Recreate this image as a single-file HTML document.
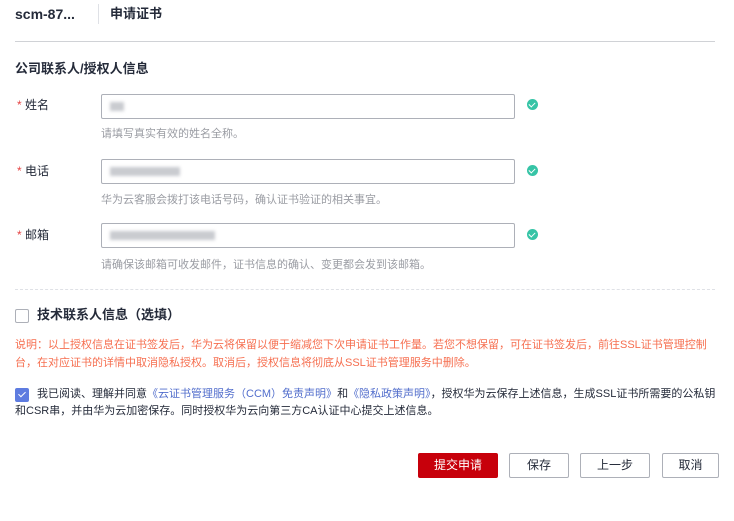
<!DOCTYPE html>
<html><head><meta charset="utf-8"><style>
*{margin:0;padding:0;box-sizing:border-box}
body{width:734px;height:521px;background:#fff;font-family:"Liberation Sans","Noto Sans CJK SC",sans-serif;color:#252b3a;position:relative;overflow:hidden;font-size:12px}
.a{position:absolute;white-space:nowrap}
.inp{position:absolute;left:101px;width:414px;height:25px;border:1px solid #adb0b8;border-radius:2px}
.blur{position:absolute;left:8px;top:7px;height:9px;background:#c9cbd0;filter:blur(1.5px)}
.ok{position:absolute;left:527px;width:11px;height:11px;border-radius:50%;background:#36c4a6}
.ok:after{content:"";position:absolute;left:3px;top:2px;width:3px;height:5px;border:solid #fff;border-width:0 1.5px 1.5px 0;transform:rotate(45deg)}
.star{color:#e54545}
.hint{color:#9a9ca3;font-size:11px}
.btn{position:absolute;top:453px;height:25px;border:1px solid #adb0b8;border-radius:2px;text-align:center;line-height:23px;font-size:12px;color:#252b3a}
</style></head><body>
<div class="a" style="left:15px;top:5px;font-size:14px;font-weight:bold;line-height:18px">scm-87...</div>
<div class="a" style="left:98px;top:4px;width:1px;height:20px;background:#dfe1e6"></div>
<div class="a" style="left:110px;top:5px;font-size:13px;font-weight:bold;line-height:18px">申请证书</div>
<div class="a" style="left:15px;top:41px;width:700px;height:1px;background:#d0d2d6"></div>
<div class="a" style="left:15px;top:60px;font-size:13px;font-weight:bold;line-height:17px">公司联系人/授权人信息</div>

<div class="a" style="left:17px;top:97px;line-height:16px"><span class="star">*</span> 姓名</div>
<div class="inp" style="top:94px"><div class="blur" style="width:14px"></div></div>
<div class="ok" style="top:99px"></div>
<div class="a hint" style="left:101px;top:125px">请填写真实有效的姓名全称。</div>

<div class="a" style="left:17px;top:163px;line-height:16px"><span class="star">*</span> 电话</div>
<div class="inp" style="top:159px"><div class="blur" style="width:70px"></div></div>
<div class="ok" style="top:165px"></div>
<div class="a hint" style="left:101px;top:191px">华为云客服会拨打该电话号码，确认证书验证的相关事宜。</div>

<div class="a" style="left:17px;top:227px;line-height:16px"><span class="star">*</span> 邮箱</div>
<div class="inp" style="top:223px"><div class="blur" style="width:105px"></div></div>
<div class="ok" style="top:229px"></div>
<div class="a hint" style="left:101px;top:256px">请确保该邮箱可收发邮件，证书信息的确认、变更都会发到该邮箱。</div>

<div class="a" style="left:15px;top:289px;width:700px;border-top:1px dashed #dfe1e6"></div>

<div class="a" style="left:15px;top:309px;width:14px;height:14px;border:1px solid #adb0b8;border-radius:2px"></div>
<div class="a" style="left:37px;top:306px;font-size:13px;font-weight:bold;line-height:17px">技术联系人信息（选填）</div>

<div class="a" style="left:15px;top:336px;font-size:11px;color:#f66f50;line-height:18px;white-space:normal;width:700px">说明：以上授权信息在证书签发后，华为云将保留以便于缩减您下次申请证书工作量。若您不想保留，可在证书签发后，前往SSL证书管理控制台，在对应证书的详情中取消隐私授权。取消后，授权信息将彻底从SSL证书管理服务中删除。</div>

<div class="a" style="left:15px;top:388px;width:14px;height:14px;background:#5e7ce0;border-radius:2px"></div>
<div class="a" style="left:20px;top:390px;width:4px;height:7px;border:solid #fff;border-width:0 1.5px 1.5px 0;transform:rotate(45deg)"></div>
<div class="a" style="left:15px;top:386px;font-size:11px;line-height:17px;white-space:normal;width:705px;text-indent:22px">我已阅读、理解并同意<span style="color:#526ecc">《云证书管理服务（CCM）免责声明》</span>和<span style="color:#526ecc">《隐私政策声明》</span>，授权华为云保存上述信息，生成SSL证书所需要的公私钥和CSR串，并由华为云加密保存。同时授权华为云向第三方CA认证中心提交上述信息。</div>

<div class="btn" style="left:418px;width:80px;background:#c7000b;border-color:#c7000b;color:#fff">提交申请</div>
<div class="btn" style="left:509px;width:60px">保存</div>
<div class="btn" style="left:580px;width:70px">上一步</div>
<div class="btn" style="left:662px;width:57px">取消</div>
</body></html>
